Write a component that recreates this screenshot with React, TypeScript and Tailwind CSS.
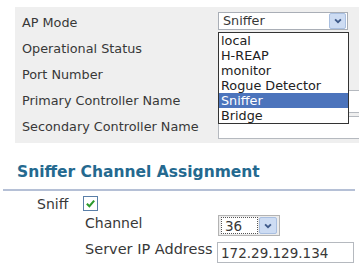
const modes = ["local", "H-REAP", "monitor", "Rogue Detector", "Sniffer", "Bridge"];

function Chevron() {
  return (
    <svg viewBox="0 0 12 12" className="h-[10px] w-[10px]">
      <path d="M2.5 4 L6 7.5 L9.5 4" fill="none" stroke="#3f5a8a" strokeWidth="2.2" />
    </svg>
  );
}

function ArrowButton({ className }: { className: string }) {
  return (
    <div className={`flex items-center justify-center rounded-[2px] border border-[#a9bfe0] bg-[#cddcf3] ${className}`}>
      <Chevron />
    </div>
  );
}

const rows = ["AP Mode", "Operational Status", "Port Number", "Primary Controller Name", "Secondary Controller Name"];

export default function App() {
  return (
    <div className="relative h-[271px] w-[359px] overflow-hidden bg-white font-['DejaVu_Sans',sans-serif] text-[#383838]">
      <div className="ml-[15px] mt-[7px] w-[344px] bg-[#efefef] py-[3px] text-[12.8px]">
        {rows.map((label, i) => (
          <div key={label} className="flex h-[26px] items-center pl-[7px]">
            <span className="w-[196px] shrink-0 whitespace-nowrap">{label}</span>
            {i === 0 && (
              <div className="-mt-[4px] flex h-[18px] w-[130px] items-center justify-between border border-[#a9aeb6] bg-white pl-[4px] pr-[1px]">
                <span>Sniffer</span>
                <ArrowButton className="h-[16px] w-[17px]" />
              </div>
            )}
            {i >= 3 && <div className="h-[23px] w-[150px] shrink-0 border border-[#b5b9bf] bg-white" />}
          </div>
        ))}
      </div>

      <div className="absolute left-[218px] top-[32px] w-[131px] border border-[#333] bg-white text-[12.8px] leading-[15px]">
        {modes.map((m) => (
          <div key={m} className={`h-[15px] pl-[2px] ${m === "Sniffer" ? "bg-[#4c74bc] text-white" : "text-[#222]"}`}>
            {m}
          </div>
        ))}
      </div>

      <div className="ml-[3px] mt-[20px] w-[352px] border-b-2 border-[#b5c0d6] pb-[8px] pl-[14px] text-[15.5px] font-bold leading-[18px] text-[#24698f]">
        Sniffer Channel Assignment
      </div>

      <div className="pl-[37px] pt-[5px] text-[14px] leading-[16px]">
        <div className="flex h-[15px] items-center">
          <span className="w-[46px] shrink-0">Sniff</span>
          <div className="flex h-[15px] w-[15px] items-center justify-center border border-[#5a7fa8] bg-white">
            <svg viewBox="0 0 12 12" className="h-[11px] w-[11px]">
              <path d="M2 6.2 L4.8 9 L10 2.8" fill="none" stroke="#2c9a2c" strokeWidth="2.2" />
            </svg>
          </div>
        </div>
        <div className="pl-[48px]">
          <div className="mt-[4px] flex items-start">
            <span className="w-[133px] shrink-0">Channel</span>
            <div className="flex h-[21px] w-[62px] items-center gap-[1px] border border-[#b3b3b3] bg-[#ececec] px-[2px]">
              <div className="flex h-[17px] w-[37px] items-center border border-dotted border-[#555] bg-white pl-[3px] text-[13.5px]">36</div>
              <ArrowButton className="h-[17px] w-[18px]" />
            </div>
          </div>
          <div className="mt-[5px] flex items-start">
            <span className="w-[132px] shrink-0 whitespace-nowrap text-[14.5px]">Server IP Address</span>
            <div className="mt-[1px] flex h-[21px] w-[137px] items-center border border-[#b5b9bf] bg-white pl-[3px] text-[13.5px]">
              172.29.129.134
            </div>
          </div>
        </div>
      </div>
    </div>
  );
}
